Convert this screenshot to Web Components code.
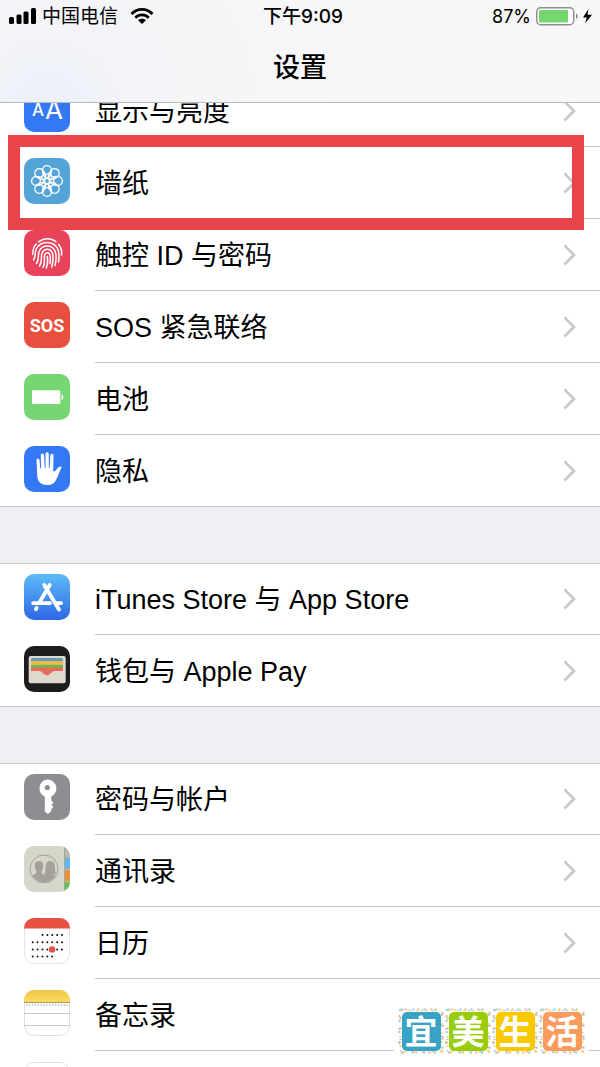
<!DOCTYPE html>
<html lang="zh-CN">
<head>
<meta charset="utf-8">
<meta name="viewport" content="width=device-width, initial-scale=1">
<title>设置</title>
<style>
html, body {
    margin: 0;
    height: 100%;
}

body {
    font-family: Inter, "Noto Sans CJK SC", sans-serif;
    color: #000;
}
</style>
</head>
<body>

<settings-app>
    <status-bar slot="top" carrier="中国电信" time="下午9:09" battery="87%"></status-bar>
    <nav-title slot="top">设置</nav-title>

    <settings-group>
        <settings-row>
            <svg slot="icon" viewBox="0 0 46 46">
                <rect width="46" height="46" rx="10" fill="#3478f6"/>
                <g fill="#fff" font-family="Inter">
                    <text x="8" y="30" font-size="17" font-weight="500">A</text>
                    <text x="21" y="33" font-size="26" font-weight="400">A</text>
                </g>
            </svg>
            显示与亮度
        </settings-row>
        <settings-row marked>
            <svg slot="icon" viewBox="0 0 46 46">
                <defs>
                    <g id="petal">
                        <circle cx="23" cy="12" r="4.400"/>
                        <path d="M23 20.400C19.400 18.500 18.400 16 18.700 12.500M23 20.400C26.600 18.500 27.600 16 27.300 12.500"/>
                    </g>
                </defs>
                <rect width="46" height="46" rx="10" fill="#55a4d8"/>
                <g fill="none" stroke="#fff" stroke-width="1.400">
                    <use href="#petal"/>
                    <use href="#petal" transform="rotate(45 23 23)"/>
                    <use href="#petal" transform="rotate(90 23 23)"/>
                    <use href="#petal" transform="rotate(135 23 23)"/>
                    <use href="#petal" transform="rotate(180 23 23)"/>
                    <use href="#petal" transform="rotate(225 23 23)"/>
                    <use href="#petal" transform="rotate(270 23 23)"/>
                    <use href="#petal" transform="rotate(315 23 23)"/>
                    <circle cx="23" cy="23" r="2.600"/>
                </g>
            </svg>
            墙纸
        </settings-row>
        <settings-row>
            <svg slot="icon" viewBox="0 0 46 46">
                <rect width="46" height="46" rx="10" fill="#e9435c"/>
                <g fill="none" stroke="#fff" stroke-width="1.500" stroke-linecap="round">
                    <path d="M14.500 11.800C20 7.600 27 7.600 32 11.800"/>
                    <path d="M8.800 24.500C8.600 19 10 16.400 12.200 14"/>
                    <path d="M34.500 14.200C37 17 38 20 37.600 25"/>
                    <path d="M9.600 30C12 26 10.500 22 12.500 18.500C17 10.500 29 10.500 33.500 18.500C35.500 22.500 35.300 27 34.500 32"/>
                    <path d="M12.500 33.500C15.500 29 13.500 24 15.500 20.500C19 14.500 27.500 14.500 30.800 20.500C33 25 32.300 30 31 35.500"/>
                    <path d="M15.500 36C18.800 31 16.500 26 18.200 22.500C20.500 18 26 18 28.200 22.500C30 27 29.200 31 27.700 37"/>
                    <path d="M19 37.500C21.800 32.500 19.500 27.500 20.800 24.500C22 22 24.800 22 25.700 24.500C27 29 26.500 31 25.800 33.500"/>
                    <path d="M23.300 26.500C24.300 31 23.500 34.500 22.300 38"/>
                </g>
            </svg>
            触控 ID 与密码
        </settings-row>
        <settings-row>
            <svg slot="icon" viewBox="0 0 46 46">
                <rect width="46" height="46" rx="10" fill="#e94f3e"/>
                <text x="23" y="30" text-anchor="middle" fill="#fff" font-family="Roboto, sans-serif" font-size="18" font-weight="700">SOS</text>
            </svg>
            SOS 紧急联络
        </settings-row>
        <settings-row>
            <svg slot="icon" viewBox="0 0 46 46">
                <rect width="46" height="46" rx="10" fill="#75d672"/>
                <rect x="8" y="16.300" width="28.300" height="13.700" rx="1" fill="#fff"/>
                <path d="M37.500 20.300C40 21 40 25.600 37.500 26.300Z" fill="#fff"/>
            </svg>
            电池
        </settings-row>
        <settings-row>
            <svg slot="icon" viewBox="0 0 46 46">
                <rect width="46" height="46" rx="10" fill="#3478f6"/>
                <path d="M12.500 14a1.500 1.500 0 0 1 3 0L16.300 22.500H17.100L16.800 9a1.600 1.600 0 0 1 3.200 0L20.700 22H21.500V8a1.600 1.600 0 0 1 3.300 0V22H25.600L26.300 9.300a1.600 1.600 0 0 1 3.200 0L29.200 25.500C31 25.500 32 24.500 33 22.800C34.500 20.500 36 20.500 37.800 21C36 24.500 34.500 29 32.500 33C30.500 37.500 27.500 39 23.500 39C17.500 39 14 36 13.300 31Z" fill="#fff"/>
            </svg>
            隐私
        </settings-row>
    </settings-group>

    <settings-group>
        <settings-row>
            <svg slot="icon" viewBox="0 0 46 46">
                <defs>
                    <linearGradient id="store-sky" x1="0" y1="0" x2="0" y2="1">
                        <stop offset="0" stop-color="#5cbcf6"/>
                        <stop offset="1" stop-color="#2f66e5"/>
                    </linearGradient>
                </defs>
                <rect width="46" height="46" rx="10" fill="url(#store-sky)"/>
                <g fill="none" stroke="#fff" stroke-width="3.800" stroke-linecap="round">
                    <path d="M25.700 11L15.300 28.800"/>
                    <path d="M12.700 33.800L11.900 35.200"/>
                    <path d="M20.300 11L35 35.500"/>
                    <path d="M9.200 29.200H26"/>
                    <path d="M32 29.200H37"/>
                </g>
            </svg>
            iTunes Store 与 App Store
        </settings-row>
        <settings-row>
            <svg slot="icon" viewBox="0 0 46 46">
                <rect width="46" height="46" rx="10" fill="#1d1d1f"/>
                <rect x="4.700" y="10" width="37" height="27.300" rx="2" fill="#ded9cf"/>
                <path d="M7 15V13.500Q7 12 8.500 12H37.500Q39 12 39 13.500V15Z" fill="#5f9dba"/>
                <rect x="7" y="15" width="32" height="3.700" fill="#eebb44"/>
                <rect x="7" y="18.700" width="32" height="3.800" fill="#83ab48"/>
                <path d="M7 22H39V25H31C28.500 25 28 26 26.700 27.500Q25 29.300 23 29.300Q21 29.300 19.300 27.500C18 26 17.500 25 15 25H7Z" fill="#e36c5b"/>
            </svg>
            钱包与 Apple Pay
        </settings-row>
    </settings-group>

    <settings-group>
        <settings-row>
            <svg slot="icon" viewBox="0 0 46 46">
                <rect width="46" height="46" rx="10" fill="#8e8d92"/>
                <path d="M23.300 5.500a9 9 0 0 1 4 17.100V26.500L29.500 28.500L27.500 30.800L29.500 33L27.300 35V37L24 40L20.800 37.500V22.600A9 9 0 0 1 23.300 5.500Z" fill="#fff"/>
                <circle cx="23.300" cy="13.500" r="2.600" fill="#8e8d92"/>
            </svg>
            密码与帐户
        </settings-row>
        <settings-row>
            <svg slot="icon" viewBox="0 0 46 46">
                <defs>
                    <clipPath id="book"><rect width="46" height="46" rx="10"/></clipPath>
                    <clipPath id="badge"><circle cx="20" cy="23" r="13.200"/></clipPath>
                </defs>
                <g clip-path="url(#book)">
                    <rect width="46" height="46" fill="#d6d6cb"/>
                    <rect x="41" width="5" height="12" fill="#bcb9b0"/>
                    <rect x="41" y="12" width="5" height="11" fill="#63b6ef"/>
                    <rect x="41" y="23.500" width="5" height="12" fill="#ef9139"/>
                    <rect x="41" y="36" width="5" height="10" fill="#62c452"/>
                    <path d="M40.700 0V46" stroke="#8f8d84" stroke-width=".8"/>
                </g>
                <circle cx="20" cy="23" r="14" fill="none" stroke="#a5a29a" stroke-width="1"/>
                <g fill="#a5a198" clip-path="url(#badge)">
                    <path d="M15 15C18 15 19.300 17 19.200 20C19.200 23 18 24 17.500 26C17.300 28.500 21.500 29 23 32V38H5V31C7.500 28.500 12.800 28.500 12.500 26C12 24 10.800 23 10.800 20C10.700 17 12 15 15 15Z"/>
                    <path d="M26 15C30 15 31 18 31 22C31 25 31.500 26.500 32.500 27.500C31 28.800 29.500 28.500 28.500 28.800C31 30 34 30 35 32V38H24C23.500 32 20.500 29.500 19.500 28C22 27 21.500 24 21.500 21C21.500 17 23 15 26 15Z"/>
                </g>
            </svg>
            通讯录
        </settings-row>
        <settings-row>
            <svg slot="icon" viewBox="0 0 46 46">
                <rect x=".5" y=".5" width="45" height="45" rx="9.500" fill="#fff" stroke="#e3e3e3"/>
                <path d="M0 10.500V10A10 10 0 0 1 10 0H36A10 10 0 0 1 46 10V10.500Z" fill="#e75042"/>
                <g fill="none" stroke="#111" stroke-width="2" stroke-linecap="round" stroke-dasharray="0 4.880">
                    <path d="M18.500 17H38.500"/>
                    <path d="M8.700 24.200H38.500"/>
                    <path d="M8.700 31.400H38.500"/>
                    <path d="M8.700 38.600H28.800"/>
                </g>
                <circle cx="28.100" cy="31.400" r="3.200" fill="#e0544a"/>
            </svg>
            日历
        </settings-row>
        <settings-row>
            <svg slot="icon" viewBox="0 0 46 46">
                <defs>
                    <linearGradient id="pad" x1="0" y1="0" x2="0" y2="1">
                        <stop offset="0" stop-color="#edc647"/>
                        <stop offset="1" stop-color="#fbdc5e"/>
                    </linearGradient>
                </defs>
                <rect x=".5" y=".5" width="45" height="45" rx="9.500" fill="#fff" stroke="#e0e0e0"/>
                <path d="M0 12V10A10 10 0 0 1 10 0H36A10 10 0 0 1 46 10V12Z" fill="url(#pad)"/>
                <path d="M0 12.500H46" stroke="#a99a63"/>
                <path d="M2 15H45" stroke="#b5b5b5" stroke-width="1.400" stroke-dasharray="1.400 1.500"/>
                <path d="M0 23.500H46M0 35.500H46" stroke="#c9c9c9"/>
            </svg>
            备忘录
        </settings-row>
        <settings-row>
            <svg slot="icon" viewBox="0 0 46 46">
                <rect x=".5" y=".5" width="45" height="45" rx="9.500" fill="#fff" stroke="#e0e0e0"/>
            </svg>
        </settings-row>
    </settings-group>

    <site-stamp slot="overlay" text="宜美生活"></site-stamp>
</settings-app>

<!-- Page shell: fixed header, list scrolled under it -->
<template id="settings-app">
<style>
:host {
    position: relative;
    display: flex;
    flex-direction: column;
    height: 100vh;
    overflow: hidden;
    background: #efeff4;
}

header {
    flex: none;
    background: radial-gradient(circle at 8% 110%, #e9effa, #f3f4f7 14%, #f7f7f8 50%);
    border-bottom: 1px solid #b8b8bc;
}

main {
    flex: 1;
    min-height: 0;
    overflow: hidden;
}

/* How far the list has been scrolled */
.scrolled {
    display: flex;
    flex-direction: column;
    gap: 56px;
    margin-top: -28px;
}
</style>
<header><slot name="top"></slot></header>
<main><div class="scrolled"><slot></slot></div></main>
<slot name="overlay"></slot>
</template>

<template id="status-bar">
<style>
:host {
    display: grid;
    grid-template-columns: 1fr auto 1fr;
    align-items: center;
    height: 34px;
    padding: 0 8px;
    font-size: 19px;
    line-height: 34px;
    white-space: nowrap;
}

.side {
    display: flex;
    align-items: center;
    gap: 6px;
}

.side svg {
    margin-bottom: 2px;
}

.end {
    justify-content: flex-end;
    gap: 5px;
}

.time {
    font-weight: 500;
    padding-left: 6px;
}

.carrier {
    margin-right: 6px;
}

.battery {
    font-size: 18px;
}
</style>
<div class="side">
    <svg width="28" height="18" viewBox="0 0 28 18" aria-hidden="true">
        <rect x="1" y="10" width="5" height="7" rx="1.500"/>
        <rect x="8.500" y="7.500" width="5" height="9.500" rx="1.500"/>
        <rect x="15.500" y="4.500" width="5" height="12.500" rx="1.500"/>
        <rect x="23" y="1" width="5" height="16" rx="1.500"/>
    </svg>
    <span class="carrier"></span>
    <svg width="24" height="18" viewBox="0 0 24 18" aria-hidden="true">
        <g fill="none" stroke="#000" stroke-width="2.800">
            <path d="M1.500 7C7.500 .8 16.500 .8 22.500 7"/>
            <path d="M5.300 10.800C9.200 7 14.800 7 18.700 10.800"/>
        </g>
        <path d="M12 17L8 13.200C10 11.200 14 11.200 16 13.200Z"/>
    </svg>
</div>
<div class="time"></div>
<div class="side end">
    <span class="battery"></span>
    <svg width="56" height="20" viewBox="0 0 56 20" aria-hidden="true">
        <rect x=".7" y="1.700" width="37" height="17" rx="4" fill="#fff" stroke="#8e8e90" stroke-width="1.400"/>
        <rect x="3" y="4" width="29" height="12.500" rx="1" fill="#75d66e"/>
        <path d="M40 7.500C42.300 8.200 42.300 12.200 40 13Z" fill="#8e8e90"/>
        <path d="M52.500 3L47 11.500H50.800L49 17.500L56 8.800H51.500Z"/>
    </svg>
</div>
</template>

<template id="nav-title">
<style>
:host {
    display: block;
}

h1 {
    margin: 0;
    height: 68px;
    line-height: 68px;
    text-align: center;
    font-size: 27px;
    font-weight: 500;
}
</style>
<h1><slot></slot></h1>
</template>

<template id="settings-group">
<style>
:host {
    display: block;
    background: #fff;
    box-shadow: inset 0 1px #c8c7cc;
}
</style>
<slot></slot>
</template>

<template id="settings-row">
<style>
:host {
    display: block;
    position: relative;
}

a {
    display: flex;
    gap: 25px;
    padding-left: 24px;
    color: inherit;
    text-decoration: none;
}

.icon {
    flex: none;
    width: 46px;
    height: 46px;
    padding-top: 11px;
}

::slotted(svg) {
    display: block;
    width: 46px;
    height: 46px;
}

.body {
    flex: 1;
    display: flex;
    align-items: center;
    justify-content: space-between;
    box-sizing: border-box;
    height: 72px;
    padding-right: 24px;
    border-bottom: 1px solid #c8c7cc;
    white-space: nowrap;
}

.label {
    padding-bottom: 2px;
    font-family: "Liberation Sans", "Noto Sans CJK SC", sans-serif;
    font-size: 27px;
}

/* Last row of a group gets a full width line */
:host(:last-of-type) a {
    box-shadow: inset 0 -1px #c8c7cc;
}

/* Red frame around the row the guide points at */
.frame {
    display: none;
    position: absolute;
    inset: -12px 16px -11px 8px;
    border: 12px solid #e8444a;
}

:host([marked]) {
    z-index: 1;
}

:host([marked]) .frame {
    display: block;
}
</style>
<a href="#">
    <div class="icon"><slot name="icon"></slot></div>
    <div class="body">
        <span class="label"><slot></slot></span>
        <svg width="13" height="22" viewBox="0 0 13 22" fill="none" stroke="#c7c7cc" stroke-width="2.600" aria-hidden="true">
            <path d="M1.500 1.500L11 11L1.500 20.500"/>
        </svg>
    </div>
</a>
<div class="frame"></div>
</template>

<template id="site-stamp">
<style>
:host {
    position: absolute;
    right: 11px;
    bottom: 9px;
    display: flex;
    gap: 1px;
    padding: 4px;
    background: #fff;
}

.tile {
    display: grid;
    place-items: center;
    width: 46px;
    height: 46px;
}

.tile > * {
    grid-area: 1 / 1;
}

.tile span {
    width: 39px;
    height: 39px;
    border-radius: 5px;
    color: #fff;
    font-family: "Noto Sans CJK SC", sans-serif;
    font-size: 33px;
    font-weight: 700;
    line-height: 37px;
    text-align: center;
}
</style>
</template>

<script>
//! Clones a template into an open shadow root
class TemplateElement extends HTMLElement {
    constructor() {
        super();
        this.attachShadow({ mode: 'open' });
        const template = document.getElementById(this.localName);
        this.shadowRoot.appendChild(template.content.cloneNode(true));
    }
}

class SettingsApp extends TemplateElement {}
class NavTitle extends TemplateElement {}
class SettingsGroup extends TemplateElement {}
class SettingsRow extends TemplateElement {}

class StatusBar extends TemplateElement {
    connectedCallback() {
        for (const name of ['carrier', 'time', 'battery']) {
            this.shadowRoot.querySelector('.' + name).textContent = this.getAttribute(name);
        }
    }
}

const stampColors = ['#38a3c6', '#98cc0c', '#f8c800', '#fa9a5c'];

// Confetti edge: the same outline dashed in several colours
const stampEdge = `
<svg width="46" height="46" viewBox="0 0 46 46" fill="none" stroke-width="2" aria-hidden="true">
    <rect x="1.500" y="1.500" width="43" height="43" rx="2" stroke="#8ecbe6" stroke-dasharray="2 9"/>
    <rect x="1.500" y="1.500" width="43" height="43" rx="2" stroke="#f7b58c" stroke-dasharray="2 11" stroke-dashoffset="-3"/>
    <rect x="2.500" y="2.500" width="41" height="41" rx="2" stroke="#f6dc6a" stroke-dasharray="2 7" stroke-dashoffset="-5"/>
    <rect x="2.500" y="2.500" width="41" height="41" rx="2" stroke="#a8b8ea" stroke-dasharray="1 10" stroke-dashoffset="-8"/>
</svg>`;

class SiteStamp extends TemplateElement {
    connectedCallback() {
        [...this.getAttribute('text')].forEach((char, i) => {
            const tile = document.createElement('div');
            tile.className = 'tile';
            tile.innerHTML = `${stampEdge}<span style="background: ${stampColors[i]}">${char}</span>`;
            this.shadowRoot.appendChild(tile);
        });
    }
}

//! Registering the custom elements
customElements.define('settings-app', SettingsApp);
customElements.define('status-bar', StatusBar);
customElements.define('nav-title', NavTitle);
customElements.define('settings-group', SettingsGroup);
customElements.define('settings-row', SettingsRow);
customElements.define('site-stamp', SiteStamp);
</script>
</body>
</html>
